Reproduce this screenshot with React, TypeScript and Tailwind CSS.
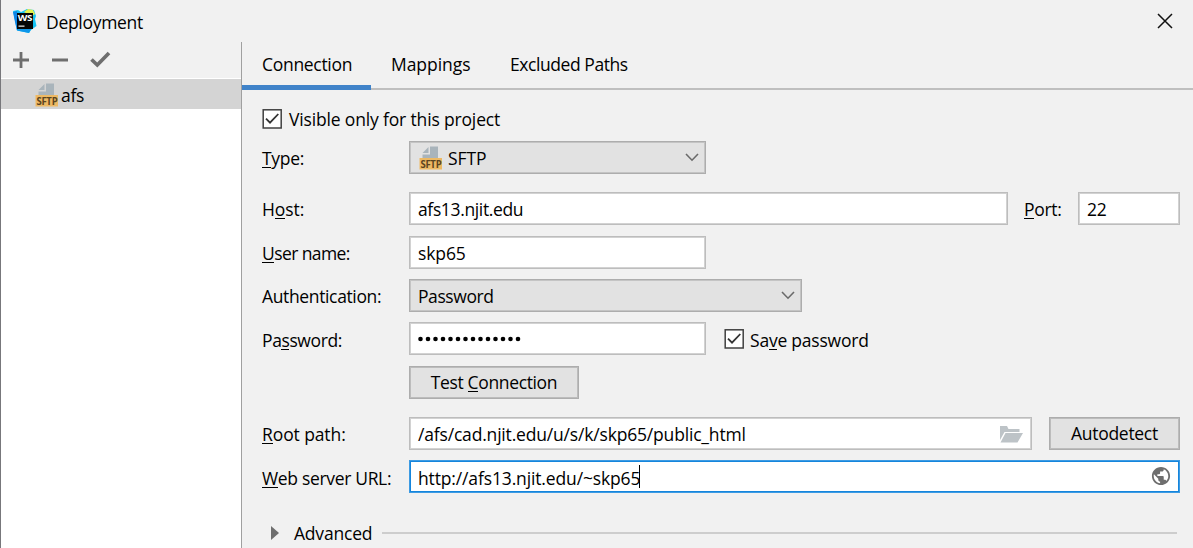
import React from "react";

type FieldProps = { className?: string; children?: React.ReactNode };

function Label({ className = "", children }: FieldProps) {
  return <div className={`w-[147px] shrink-0 ${className}`}>{children}</div>;
}

function Key({ children }: { children: React.ReactNode }) {
  return <span className="inline-block h-[20px] align-baseline leading-[20px] shadow-[inset_0_-1px_0_#000]">{children}</span>;
}

function Input({ className = "", focused = false, children }: FieldProps & { focused?: boolean }) {
  const frame = focused
    ? "border-[#3d9be3] shadow-[inset_0_0_0_1px_#1585dc]"
    : "border-[#bdbdbd] shadow-[inset_0_0_0_1px_#d2d2d2]";
  return (
    <div className={`flex h-[33px] shrink-0 items-center border bg-white pl-[8px] ${frame} ${className}`}>
      {children}
    </div>
  );
}

function Select({ className = "", children }: FieldProps) {
  return (
    <div className={`flex h-[33px] shrink-0 items-center border border-[#adadad] bg-[#e2e2e2] pl-[8px] pr-[6px] shadow-[inset_0_0_0_1px_#c4c4c4] ${className}`}>
      {children}
      <svg className="ml-auto" width="14" height="9" viewBox="0 0 14 9" fill="none" stroke="#6a6a6a" strokeWidth="1.6">
        <path d="M1 1L7 7.2L13 1" />
      </svg>
    </div>
  );
}

function Button({ className = "", children }: FieldProps) {
  return (
    <button type="button" className={`flex h-[33px] shrink-0 items-center justify-center border border-[#adadad] bg-[#e2e2e2] pb-px shadow-[inset_0_0_0_1px_#bcbcbc] ${className}`}>
      {children}
    </button>
  );
}

function Check() {
  return (
    <svg width="20" height="20" viewBox="0 0 20 20" fill="none" className="shrink-0">
      <rect x="1.2" y="0.8" width="18" height="18.2" fill="#fff" stroke="#404040" strokeWidth="1.5" />
      <path d="M4 9.7L8 13.7L16.3 5" stroke="#333" strokeWidth="1.8" />
    </svg>
  );
}

function SftpIcon() {
  return (
    <svg width="23" height="24" viewBox="0 0 23 24" className="shrink-0">
      <path d="M11 0.5H19V12H3.5V8.5H11Z" fill="#a9b4bb" />
      <path d="M3.5 7L9.5 1V7Z" fill="#a9b4bb" />
      <rect x="0.5" y="12" width="22.5" height="11.5" fill="#edb964" />
      <text x="1.4" y="21.8" fontFamily="Open Sans, sans-serif" fontWeight="700" fontSize="10.5" textLength="21" lengthAdjust="spacingAndGlyphs" fill="#5b4421">SFTP</text>
    </svg>
  );
}

function WebStormIcon() {
  return (
    <svg width="26" height="26" viewBox="0 0 26 26">
      <path d="M1 3L6 2L9 4L15 1L22 2L24 8L23 11L24.500 18L19 22L17 25L5 22.500Z" fill="#16c3f3" />
      <path d="M12 4L16 1L21 2L23 6L20 8Z" fill="#e5f04e" />
      <path d="M1 4L5 3L7 21L5 22.500L3 14Z" fill="#0e86e6" />
      <path d="M8 21H19L17 25L5 22.500Z" fill="#0e96ea" />
      <rect x="5" y="5" width="16" height="16" fill="#050505" />
      <text x="5.800" y="13.400" fontFamily="Open Sans, sans-serif" fontWeight="700" fontSize="9.500" textLength="14.500" lengthAdjust="spacingAndGlyphs" fill="#fff">WS</text>
      <rect x="6.500" y="17.500" width="6" height="1.300" fill="#ddd" />
    </svg>
  );
}

export default function App() {
  return (
    <div className="flex h-[548px] w-[1193px] flex-col overflow-hidden border-l border-[#77777b] bg-[#f1f1f1] font-['Open_Sans','Noto_Sans',sans-serif] text-[17.5px] leading-[24px] tracking-[-0.3px] text-black">
      <header className="flex h-[42px] shrink-0 items-center pl-[11px] pr-[20px]">
        <WebStormIcon />
        <span className="ml-[8px] pt-[2px]">Deployment</span>
        <svg className="ml-auto" width="16" height="16" viewBox="0 0 16 16" stroke="#111" strokeWidth="1.5">
          <path d="M1 1L15 15M15 1L1 15" />
        </svg>
      </header>
      <div className="flex min-h-0 flex-1">
        <aside className="flex w-[241px] shrink-0 flex-col border-r border-[#a0a0a0] bg-white">
          <div className="flex h-[36px] shrink-0 items-center bg-[#f1f1f1] pl-[12px]">
            <svg width="98" height="20" viewBox="0 0 98 20" fill="none" stroke="#6e6e6e" strokeWidth="2.8">
              <path d="M0 10H16M8 2V18M39 10H55" />
              <path d="M78.500 9.500L84.300 15L96 3" strokeWidth="3.700" />
            </svg>
          </div>
          <div className="mt-px flex h-[30px] shrink-0 items-center bg-[#d4d4d4] pl-[34px] pt-px">
            <SftpIcon />
            <span className="ml-[3px]">afs</span>
          </div>
        </aside>
        <main className="flex min-w-0 flex-1 flex-col">
          <nav className="flex h-[48px] shrink-0 border-b-2 border-[#bfbfbf]">
            <div className="h-[48px] w-[129px] border-b-[5px] border-[#4083c9] pl-[20px] pt-[10px]">Connection</div>
            <div className="w-[119px] pl-[20px] pt-[10px] tracking-[-0.05px]">Mappings</div>
            <div className="pl-[20px] pt-[10px] tracking-[-0.43px]">Excluded Paths</div>
          </nav>
          <form className="flex flex-col pl-[20px]">
            <div className="mt-[19px] flex h-[20px] items-center">
              <Check />
              <span className="ml-[7px] tracking-[-0.16px]">Visible only for this project</span>
            </div>
            <div className="mt-[12px] flex items-center">
              <Label><Key>T</Key>ype:</Label>
              <Select className="w-[297px]"><span className="ml-px flex items-center"><SftpIcon /><span className="ml-[6px] tracking-[-0.1px]">SFTP</span></span></Select>
            </div>
            <div className="mt-[18px] flex items-center">
              <Label className="tracking-[-0.1px]">H<Key>o</Key>st:</Label>
              <Input className="w-[599px] tracking-[-0.36px]">afs13.njit.edu</Input>
              <div className="ml-[16px] w-[54px]"><Key>P</Key>ort:</div>
              <Input className="w-[102px]">22</Input>
            </div>
            <div className="mt-[11px] flex items-center">
              <Label className="tracking-[-0.6px]"><Key>U</Key>ser name:</Label>
              <Input className="w-[297px] tracking-[-0.1px]">skp65</Input>
            </div>
            <div className="mt-[10px] flex items-center">
              <Label className="tracking-[-0.36px]">Authentication:</Label>
              <Select className="w-[393px] tracking-[-0.42px]">Password</Select>
            </div>
            <div className="mt-[10px] flex items-center">
              <Label className="pt-[2px] tracking-[-0.4px]">Pa<Key>s</Key>sword:</Label>
              <Input className="w-[297px]">
                <svg width="104" height="6" viewBox="0 0 104 6">
                  {Array.from({ length: 14 }, (_, i) => <circle key={i} cx={2.5 + i * 7.5} cy="3" r="2.3" />)}
                </svg>
              </Input>
              <div className="ml-[18px] flex items-center pt-[2px]"><span className="pb-px"><Check /></span><span className="ml-[6px] tracking-[-0.22px]">Sa<Key>v</Key>e password</span></div>
            </div>
            <div className="mt-[11px] flex pl-[147px]">
              <Button className="w-[170px] tracking-[-0.36px]"><span>Test <Key>C</Key>onnection</span></Button>
            </div>
            <div className="mt-[18px] flex items-center">
              <Label className="tracking-[-0.1px]"><Key>R</Key>oot path:</Label>
              <Input className="w-[623px] pr-[8px] tracking-[-0.18px]">
                /afs/cad.njit.edu/u/s/k/skp65/public_html
                <svg className="ml-auto" width="24" height="18" viewBox="0 0 24 18" fill="#bdc3c7">
                  <path d="M1 1H8L9.500 4H20.500V7H5.500L1 15ZM6.500 8H24L18.500 17.500H1.500Z" />
                </svg>
              </Input>
              <Button className="ml-[17px] w-[131px]">Autodetect</Button>
            </div>
            <div className="mt-[10px] flex items-center">
              <Label className="pt-[2px] tracking-[-0.33px]"><Key>W</Key>eb server URL:</Label>
              <Input focused className="w-[771px] pr-[8px] tracking-[-0.14px]">
                <span className="pt-[2px]">http://afs13.njit.edu/~skp65</span><span className="-ml-px h-[23px] w-px bg-black" />
                <svg className="mb-[2px] ml-auto" width="20" height="20" viewBox="1 1 22 22" fill="#6e6e6e">
                  <path d="M12 2C6.48 2 2 6.48 2 12s4.48 10 10 10 10-4.48 10-10S17.52 2 12 2zm-1 17.93c-3.95-.49-7-3.85-7-7.93 0-.62.08-1.21.21-1.79L9 15v1c0 1.1.9 2 2 2v1.93zm6.9-2.54c-.26-.81-1-1.39-1.9-1.39h-1v-3c0-.55-.45-1-1-1H8v-2h2c.55 0 1-.45 1-1V7h2c1.1 0 2-.9 2-2v-.41c2.93 1.19 5 4.06 5 7.41 0 2.08-.8 3.97-2.1 5.39z" />
                </svg>
              </Input>
            </div>
            <div className="mt-[28px] flex items-center">
              <svg className="ml-[9px]" width="8" height="14" viewBox="0 0 8 14" fill="#6e6e6e"><path d="M0 0L8 7L0 14Z" /></svg>
              <span className="ml-[15px] w-[79px] tracking-[-0.2px]">Advanced</span>
              <div className="ml-[9px] mr-[16px] h-[2px] flex-1 bg-[#cdcdcd]" />
            </div>
          </form>
        </main>
      </div>
    </div>
  );
}
